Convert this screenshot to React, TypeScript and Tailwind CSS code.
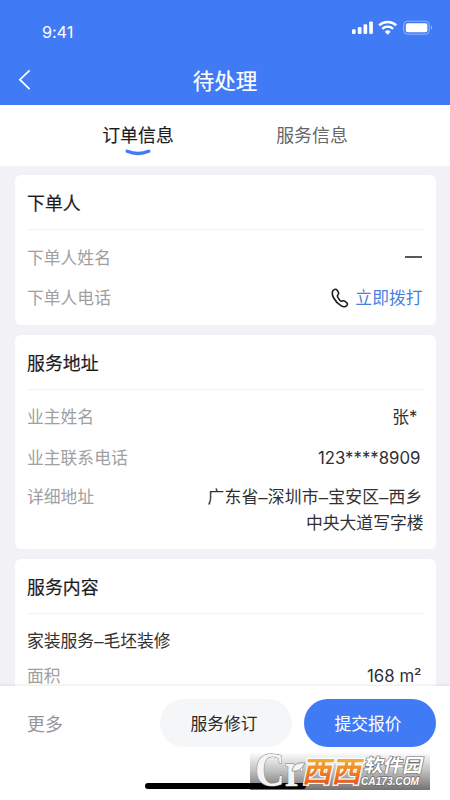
import { ReactNode } from "react";
import clsx from "clsx";

const StatusBar = () => (
  <div className="flex h-[55px] items-start justify-between pl-[42px] pr-[17px]">
    <span className="mt-[20px] font-['Inter','Liberation_Sans',sans-serif] text-[16.3px] leading-6 tracking-[-0.1px]">
      9:41
    </span>
    <div className="mt-[20px] flex items-center">
      <svg width="22" height="15" viewBox="0 0 22 15" fill="currentColor">
        <rect x="1" y="9.3" width="3.6" height="4.7" rx="1.2" />
        <rect x="6.8" y="7" width="3.7" height="7" rx="1.2" />
        <rect x="12.5" y="4.3" width="3.7" height="9.7" rx="1.2" />
        <rect x="18.2" y="1.4" width="3.7" height="12.6" rx="1.2" />
      </svg>
      <svg className="ml-[5px]" width="20" height="15" viewBox="0 0 20 15" fill="none" stroke="currentColor">
        <path d="M1.2 5.4a12.4 12.4 0 0 1 17 0" strokeWidth="2.5" />
        <path d="M4.3 8.8a7.9 7.9 0 0 1 10.8 0" strokeWidth="2.4" />
        <path d="M6.8 11.7a4.2 4.2 0 0 1 5.8 0L9.7 14.7z" fill="currentColor" stroke="none" />
      </svg>
      <svg className="ml-[5px]" width="30" height="15" viewBox="0 0 30 15">
        <rect x="0.7" y="1.2" width="25.6" height="13" rx="3.8" fill="none" stroke="currentColor" strokeOpacity="0.45" />
        <rect x="2.8" y="3.2" width="21.6" height="9" rx="2" fill="currentColor" />
        <path d="M28 5.6c1.5.8 1.5 3.4 0 4.2z" fill="currentColor" fillOpacity="0.5" />
      </svg>
    </div>
  </div>
);

const Header = () => (
  <header className="h-[105px] shrink-0 bg-[#417af5] text-white">
    <StatusBar />
    <div className="flex h-[50px] items-center">
      <button className="w-[60px] pl-[18px]">
        <svg width="13" height="22" viewBox="0 0 13 22" fill="none" stroke="currentColor" strokeWidth="1.7">
          <path d="M11.6 1.4 1.9 10.7l9.7 9.5" />
        </svg>
      </button>
      <h1 className="flex-1 pr-[60px] pt-[2px] text-center text-[21.5px] leading-[50px] [-webkit-text-stroke:0.2px]">
        待处理
      </h1>
    </div>
  </header>
);

const Tabs = () => (
  <nav className="flex h-[61px] shrink-0 bg-white pl-[51px] pr-[51px] text-[17.9px] leading-[26px]">
    <button className="flex flex-1 flex-col items-center pt-[18px] text-[#1c1c1e]">
      <span className="[-webkit-text-stroke:0.15px]">订单信息</span>
      <svg className="-mt-px" width="26" height="8" viewBox="0 0 26 8" fill="none">
        <path d="M2.3 3.2Q13 7.8 23.7 3.2" stroke="#417af5" strokeWidth="3.4" strokeLinecap="round" />
      </svg>
    </button>
    <button className="flex flex-1 justify-center pt-[18px] text-[#666668]">服务信息</button>
  </nav>
);

type CardProps = { title: string; className?: string; children: ReactNode };

const Card = ({ title, className, children }: CardProps) => (
  <section className={clsx("shrink-0 rounded-[6px] bg-white pl-[12.5px] pr-[11px]", className)}>
    <h2 className="h-[55px] border-b border-[#f3f3f5] text-[17.9px] leading-[57px] text-[#1c1c1e] [-webkit-text-stroke:0.2px]">
      {title}
    </h2>
    {children}
  </section>
);

type RowProps = { label: string; className?: string; children: ReactNode };

const Row = ({ label, className, children }: RowProps) => (
  <div className={clsx("flex justify-between text-[16.8px] leading-[26px]", className)}>
    <span className="text-[#a0a0a2]">{label}</span>
    <span className="text-right text-[#303032]">{children}</span>
  </div>
);

const PhoneIcon = () => (
  <svg width="18" height="20" viewBox="0 0 18 20" fill="none" stroke="#1c1c1e" strokeWidth="1.6" strokeLinejoin="round">
    <path d="M2.1 2.5C3.4 1 5.1.8 6.1 2.2l1.3 2.1c.6 1 .2 1.7-.5 2.5-.8.8-.6 1.6.1 2.8l1.6 2.3c.8 1 1.6 1.6 2.6 1.2 1-.4 1.6-.6 2.4 0l2 1.5c1.1.9 1.1 1.9.2 2.9-1.3 1.5-3.5 1.5-5.5.4C7.3 16.2 4.6 13.5 2.7 10 1.3 7.3.8 4.3 2.1 2.5z" />
  </svg>
);

const Watermark = () => (
  <>
    <div className="absolute left-[250px] top-[752px] h-[38px] w-[180px] bg-linear-to-b from-[#808080]/0 via-[#808080]/50 to-[#727272]" />
    <svg className="absolute left-[250px] top-[748px] z-20 overflow-visible" width="180" height="42" viewBox="0 0 180 42">
      <defs>
        <linearGradient id="flame" x1="0" y1="0" x2="0" y2="1">
          <stop offset="0.2" stopColor="#f5b42c" />
          <stop offset="0.9" stopColor="#e4501f" />
        </linearGradient>
      </defs>
      <text x="5" y="37.500" fontFamily="'Liberation Serif', serif" fontWeight="700" fontSize="49" textLength="48" lengthAdjust="spacingAndGlyphs" fill="#f4f4f4" stroke="#7a7a7a" strokeWidth="1" paintOrder="stroke">
        Cr
      </text>
      <path d="M42 23c1-6 5-9 13-8-3 6-7 9-13 8z" fill="#f4f4f4" stroke="#7a7a7a" strokeWidth="0.7" />
      <g transform="skewX(-12)" fontFamily="'Noto Sans CJK SC', sans-serif" fontWeight="700">
        <text x="59" y="34.5" fontSize="29" textLength="59" lengthAdjust="spacingAndGlyphs" fill="url(#flame)" stroke="#fff" strokeWidth="2.4" paintOrder="stroke">
          西西
        </text>
        <text x="118" y="24" fontSize="18.5" textLength="59" lengthAdjust="spacingAndGlyphs" fill="#fff" stroke="#6f6f6f" strokeWidth="1.3" paintOrder="stroke">
          软件园
        </text>
      </g>
      <text x="111" y="36.5" fontFamily="'Liberation Sans', sans-serif" fontSize="11" fontStyle="italic" textLength="58" lengthAdjust="spacingAndGlyphs" fontWeight="700" fill="#fff" stroke="#6f6f6f" strokeWidth="1.3" paintOrder="stroke">
        CA173.COM
      </text>
    </svg>
  </>
);

const Footer = () => (
  <footer className="h-[114px] shrink-0 bg-white shadow-[0_-1px_3px_rgba(0,0,0,0.09)]">
    <div className="flex pl-[27px] pr-[14px] pt-[13px] leading-[48px]">
      <button className="w-[133px] pt-[2px] text-left text-[17.9px] text-[#959597]">更多</button>
      <button className="h-[48px] w-[132px] rounded-full bg-[#f5f6f7] pr-[4px] pt-px text-[16.8px] text-[#29292b]">
        服务修订
      </button>
      <button className="ml-[11.5px] h-[48px] w-[132px] rounded-full bg-[#417af5] pr-[3px] pt-px text-[16.8px] text-white">
        提交报价
      </button>
    </div>
    <div className="relative z-10 mx-auto mt-[34px] h-[6px] w-[161px] rounded-full bg-black" />
  </footer>
);

const App = () => {
  return (
    <div className="relative flex h-[800px] w-[450px] flex-col overflow-hidden bg-[#f2f2f6] font-['Inter','Noto_Sans_CJK_SC',sans-serif]">
      <Header />
      <Tabs />
      <main className="flex min-h-0 flex-1 flex-col gap-[10px] overflow-hidden pl-[14.5px] pr-[14.5px] pt-[9px]">
        <Card title="下单人" className="h-[150px]">
          <Row label="下单人姓名" className="mt-[15px]">
            <span className="mr-[3px] mt-[11px] block h-[2px] w-[17px] bg-[#58585a]" />
          </Row>
          <Row label="下单人电话" className="mt-[14px]">
            <span className="flex items-center gap-[6px] pr-[2px] text-[#4b7fdf]">
              <PhoneIcon />
              立即拨打
            </span>
          </Row>
        </Card>
        <Card title="服务地址" className="h-[214px]">
          <Row label="业主姓名" className="mt-[14px]">
            <span className="mr-[7px]">张*</span>
          </Row>
          <Row label="业主联系电话" className="mt-[15px]">
            <span className="mr-[4px]">123****8909</span>
          </Row>
          <Row label="详细地址" className="mt-[13px]">
            <span className="mr-[2px] block pt-px font-['Liberation_Sans','Noto_Sans_CJK_SC',sans-serif] tracking-[0.17px]">
              广东省–深圳市–宝安区–西乡
            </span>
            <span className="-mt-px mr-[1px] block">中央大道写字楼</span>
          </Row>
        </Card>
        <Card title="服务内容" className="h-[160px]">
          <p className="mt-[15px] font-['Liberation_Sans','Noto_Sans_CJK_SC',sans-serif] text-[16.8px] leading-[26px] text-[#303032]">
            家装服务–毛坯装修
          </p>
          <Row label="面积" className="mt-[8px]">
            <span className="mr-[3px]">168 m²</span>
          </Row>
        </Card>
      </main>
      <Footer />
      <Watermark />
    </div>
  );
};

export default App;
